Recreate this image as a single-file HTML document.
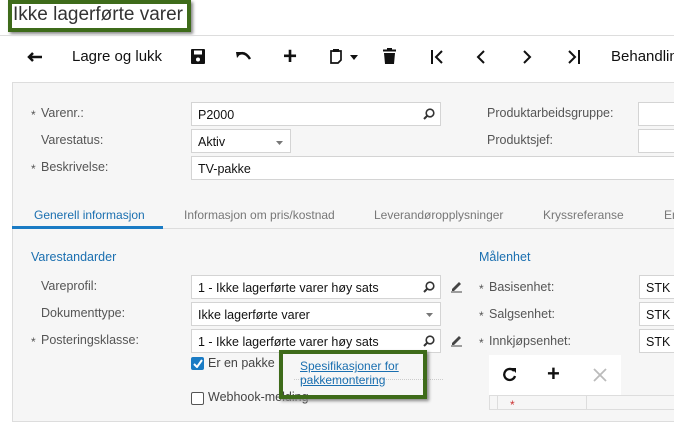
<!DOCTYPE html>
<html><head><meta charset="utf-8"><style>
*{box-sizing:border-box;margin:0;padding:0}
body{width:674px;height:406px;overflow:hidden;background:#fff;font-family:"Liberation Sans",Arial,sans-serif;position:relative;color:#222}
.a{position:absolute}
.lbl{position:absolute;font-size:12.5px;color:#555}
.inp{position:absolute;background:#fff;border:1px solid #d4d4d4;font-size:12.5px;color:#111;padding:5px 0 0 6px;height:24px;white-space:nowrap;overflow:hidden}
.star{color:#555;position:absolute;font-size:12px}
</style></head><body>
<div class="a" style="left:8px;top:0;width:183px;height:32px;border:4px solid #3e6b1a;box-shadow:2px 2px 3px #888;background:#fff"></div>
<div class="a" style="left:13px;top:4px;font-size:19px;color:#333;white-space:nowrap">Ikke lagerførte varer</div>
<div class="a" style="left:0;top:35px;width:674px;height:1px;background:#ddd"></div>

<svg class="a" style="left:27px;top:50px" width="16" height="14" viewBox="0 0 16 14"><path d="M2 7h13M6 3L2 7l4 4" stroke="#111" stroke-width="2.5" fill="none"/></svg>
<div class="a" style="left:72px;top:48px;font-size:15px;color:#111">Lagre og lukk</div>
<svg class="a" style="left:191px;top:49px" width="14" height="15" viewBox="0 0 14 15"><rect x="0" y="0" width="14" height="15" rx="1" fill="#111"/><rect x="3" y="1.5" width="8" height="4" fill="#fff"/><circle cx="7" cy="10.5" r="2" fill="#fff"/></svg>
<svg class="a" style="left:236px;top:51px" width="16" height="10" viewBox="0 0 16 10"><path d="M3 3Q9 0 14 8" stroke="#111" stroke-width="2.5" fill="none"/><path d="M0 1L6 1 1 7z" fill="#111"/></svg>
<div class="a" style="left:283px;top:43px;font-size:24px;font-weight:bold;color:#111">+</div>
<svg class="a" style="left:330px;top:48px" width="12" height="16" viewBox="0 0 12 16"><path d="M1 3h10v9l-3 3H1z" stroke="#111" stroke-width="1.7" fill="none"/><rect x="3" y="1" width="6" height="3" fill="#111"/></svg>
<svg class="a" style="left:350px;top:55px" width="8" height="5"><path d="M0 0h8L4 5z" fill="#111"/></svg>
<svg class="a" style="left:383px;top:48px" width="13" height="16" viewBox="0 0 13 16"><rect x="0" y="1.5" width="13" height="2" fill="#111"/><rect x="4" y="0" width="5" height="2" fill="#111"/><path d="M1 5h11l-1 11H2z" fill="#111"/></svg>
<svg class="a" style="left:430px;top:50px" width="14" height="14" viewBox="0 0 14 14"><path d="M2 0v14M12 1L6 7l6 6" stroke="#111" stroke-width="2" fill="none"/></svg>
<svg class="a" style="left:476px;top:50px" width="10" height="14" viewBox="0 0 10 14"><path d="M8 1L2 7l6 6" stroke="#111" stroke-width="2" fill="none"/></svg>
<svg class="a" style="left:522px;top:50px" width="10" height="14" viewBox="0 0 10 14"><path d="M2 1l6 6-6 6" stroke="#111" stroke-width="2" fill="none"/></svg>
<svg class="a" style="left:567px;top:50px" width="14" height="14" viewBox="0 0 14 14"><path d="M2 1l6 6-6 6M12 0v14" stroke="#111" stroke-width="2" fill="none"/></svg>
<div class="a" style="left:611px;top:48px;font-size:15px;color:#111;white-space:nowrap">Behandling</div>

<div class="a" style="left:12px;top:82px;width:680px;height:340px;background:#f6f6f6;border:1px solid #ddd"></div>

<div class="star" style="left:31px;top:108px">*</div><div class="lbl" style="left:41px;top:106px">Varenr.:</div>
<div class="inp" style="left:191px;top:102px;width:250px">P2000</div>
<div class="lbl" style="left:41px;top:133px">Varestatus:</div>
<div class="inp" style="left:191px;top:129px;width:100px">Aktiv</div>
<svg class="a" style="left:276px;top:141px" width="7" height="4"><path d="M0 0h7L3.5 4z" fill="#777"/></svg>
<div class="star" style="left:31px;top:162px">*</div><div class="lbl" style="left:41px;top:160px">Beskrivelse:</div>
<div class="inp" style="left:191px;top:156px;width:500px">TV-pakke</div>
<div class="lbl" style="left:487px;top:106px">Produktarbeidsgruppe:</div>
<div class="lbl" style="left:487px;top:133px">Produktsjef:</div>
<div class="inp" style="left:638px;top:102px;width:50px"></div>
<div class="inp" style="left:638px;top:129px;width:50px"></div>

<div class="a" style="left:12px;top:228px;width:662px;height:1px;background:#ddd"></div>
<div class="a" style="left:12px;top:226px;width:151px;height:3px;background:#1a7bc4"></div>
<div class="a" style="left:34px;top:208px;font-size:12px;color:#1a6fb0">Generell informasjon</div>
<div class="a" style="left:184px;top:208px;font-size:12px;color:#777">Informasjon om pris/kostnad</div>
<div class="a" style="left:374px;top:208px;font-size:12px;color:#777">Leverandøropplysninger</div>
<div class="a" style="left:543px;top:208px;font-size:12px;color:#777">Kryssreferanse</div>
<div class="a" style="left:664px;top:208px;font-size:12px;color:#777">En</div>

<div class="a" style="left:31px;top:250px;font-size:12.5px;color:#1a6fb0">Varestandarder</div>
<div class="a" style="left:479px;top:250px;font-size:12.5px;color:#1a6fb0">Målenhet</div>

<div class="lbl" style="left:41px;top:279px">Vareprofil:</div>
<div class="inp" style="left:191px;top:275px;width:250px">1 - Ikke lagerførte varer høy sats</div>
<div class="lbl" style="left:41px;top:306px">Dokumenttype:</div>
<div class="inp" style="left:191px;top:302px;width:250px">Ikke lagerførte varer</div>
<svg class="a" style="left:426px;top:313px" width="7" height="4"><path d="M0 0h7L3.5 4z" fill="#777"/></svg>
<div class="star" style="left:31px;top:335px">*</div><div class="lbl" style="left:41px;top:333px">Posteringsklasse:</div>
<div class="inp" style="left:191px;top:329px;width:250px">1 - Ikke lagerførte varer høy sats</div>
<svg class="a" style="left:423px;top:108px" width="12" height="12" viewBox="0 0 12 12"><circle cx="7" cy="5" r="3.8" stroke="#333" stroke-width="1.6" fill="none"/><path d="M4.5 7.5L1 11" stroke="#333" stroke-width="2"/></svg>
<svg class="a" style="left:423px;top:281px" width="12" height="12" viewBox="0 0 12 12"><circle cx="7" cy="5" r="3.8" stroke="#333" stroke-width="1.6" fill="none"/><path d="M4.5 7.5L1 11" stroke="#333" stroke-width="2"/></svg>
<svg class="a" style="left:423px;top:335px" width="12" height="12" viewBox="0 0 12 12"><circle cx="7" cy="5" r="3.8" stroke="#333" stroke-width="1.6" fill="none"/><path d="M4.5 7.5L1 11" stroke="#333" stroke-width="2"/></svg>
<svg class="a" style="left:450px;top:280px" width="13" height="13" viewBox="0 0 13 13"><path d="M2 9L9 2l2 2-7 7H2z" fill="#444"/><path d="M1 12h11" stroke="#444"/></svg>
<svg class="a" style="left:450px;top:334px" width="13" height="13" viewBox="0 0 13 13"><path d="M2 9L9 2l2 2-7 7H2z" fill="#444"/><path d="M1 12h11" stroke="#444"/></svg>

<div class="star" style="left:479px;top:282px">*</div><div class="lbl" style="left:489px;top:280px">Basisenhet:</div>
<div class="star" style="left:479px;top:309px">*</div><div class="lbl" style="left:489px;top:307px">Salgsenhet:</div>
<div class="star" style="left:479px;top:336px">*</div><div class="lbl" style="left:489px;top:334px">Innkjøpsenhet:</div>
<div class="inp" style="left:639px;top:275px;width:50px">STK</div>
<div class="inp" style="left:639px;top:302px;width:50px">STK</div>
<div class="inp" style="left:639px;top:329px;width:50px">STK</div>

<div class="a" style="left:191px;top:357px;width:13px;height:13px;background:#1a7bc4;border-radius:2px"></div>
<svg class="a" style="left:193px;top:359px" width="10" height="9"><path d="M1 5l3 3 5-7" stroke="#fff" stroke-width="2" fill="none"/></svg>
<div class="a" style="left:208px;top:356px;font-size:12.5px;color:#444">Er en pakke</div>
<div class="a" style="left:294px;top:379px;width:149px;border-top:1px dotted #ccc"></div>
<div class="a" style="left:191px;top:392px;width:13px;height:13px;border:1px solid #555;border-radius:2px;background:#fff"></div>
<div class="a" style="left:208px;top:390px;font-size:12.5px;color:#444">Webhook-melding</div>
<div class="a" style="left:279px;top:350px;width:148px;height:49px;border:4px solid #3e6b1a;box-shadow:2px 2px 3px #888"></div>
<div class="a" style="left:300px;top:359px;font-size:12px;color:#1a6fb0;text-decoration:underline;line-height:14px;white-space:nowrap">Spesifikasjoner for<br>pakkemontering</div>

<div class="a" style="left:489px;top:355px;width:132px;height:40px;background:#fff"></div>
<svg class="a" style="left:502px;top:367px" width="15" height="15" viewBox="0 0 15 15"><path d="M12 4A5.5 5.5 0 1 0 13 9" stroke="#111" stroke-width="2.3" fill="none"/><path d="M9 1h5v5z" fill="#111"/></svg>
<div class="a" style="left:547px;top:361px;font-size:22px;font-weight:bold;color:#111">+</div>
<svg class="a" style="left:593px;top:368px" width="14" height="14"><path d="M1 1l12 12M13 1L1 13" stroke="#bbb" stroke-width="1.8"/></svg>
<div class="a" style="left:489px;top:395px;width:190px;height:15px;background:#f6f6f6;border:1px solid #ddd"></div>
<div class="a" style="left:497px;top:395px;width:1px;height:15px;background:#ddd"></div>
<div class="a" style="left:586px;top:395px;width:1px;height:15px;background:#ddd"></div>
<div class="a" style="left:510px;top:398px;font-size:12px;color:#c33">*</div>
</body></html>
